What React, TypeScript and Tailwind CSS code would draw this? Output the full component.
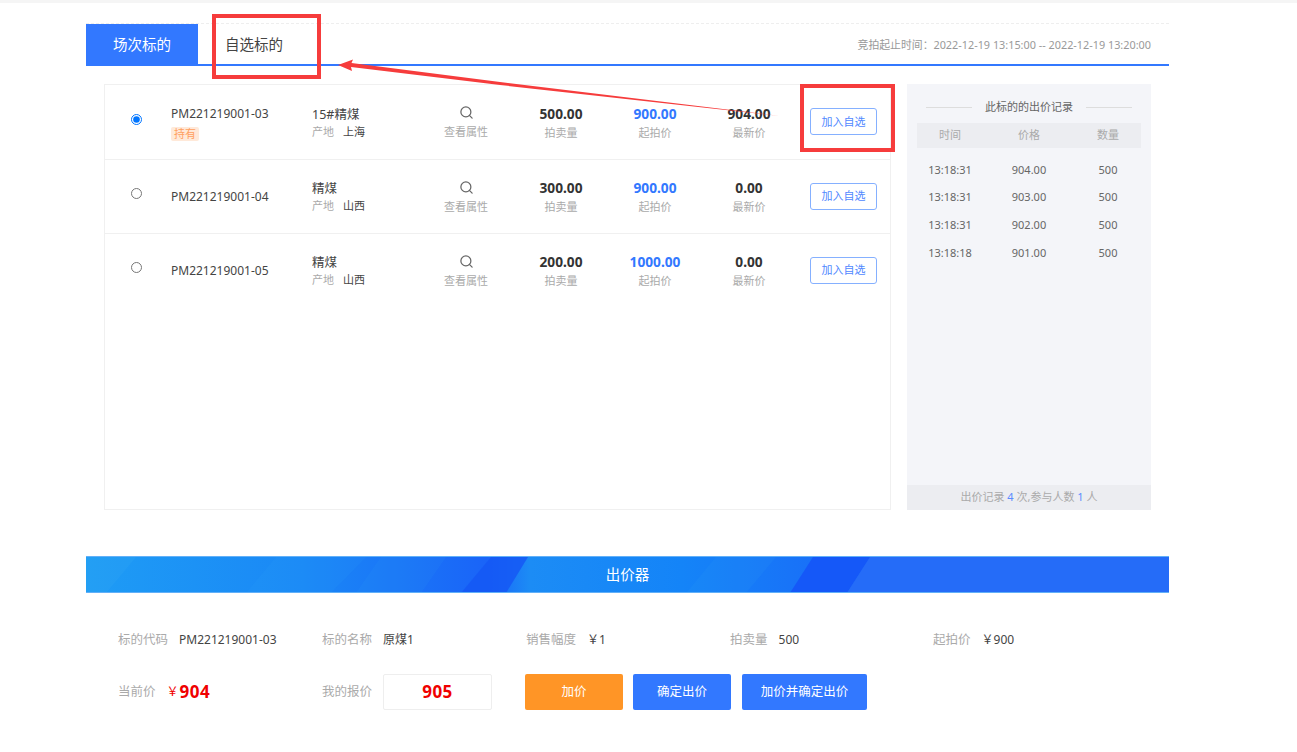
import React from "react";
import { Search } from "lucide-react";

const rows = [
  { code: "PM221219001-03", name: "15#精煤", place: "上海", qty: "500.00", start: "900.00", last: "904.00", held: true },
  { code: "PM221219001-04", name: "精煤", place: "山西", qty: "300.00", start: "900.00", last: "0.00", held: false },
  { code: "PM221219001-05", name: "精煤", place: "山西", qty: "200.00", start: "1000.00", last: "0.00", held: false },
];
const records = [
  ["13:18:31", "904.00", "500"],
  ["13:18:31", "903.00", "500"],
  ["13:18:31", "902.00", "500"],
  ["13:18:18", "901.00", "500"],
];
const info = [
  ["标的代码", "PM221219001-03"],
  ["标的名称", "原煤1"],
  ["销售幅度", "￥1"],
  ["拍卖量", "500"],
  ["起拍价", "￥900"],
];

function Stat({ value, label, blue }: { value: string; label: string; blue?: boolean }) {
  return (
    <div className="w-[94px] pt-[2px] flex flex-col items-center">
      <div className={`text-[13.7px] leading-[18px] font-bold ${blue ? "text-[#3278ff]" : "text-[#333333]"}`}>{value}</div>
      <div className="mt-[2px] text-[11px] leading-[16px] text-[#aaaaaa]">{label}</div>
    </div>
  );
}

export default function App() {
  return (
    <div
      className="relative w-[1297px] h-[752px] overflow-hidden bg-white"
      style={{ fontFamily: '"Noto Sans", "Noto Sans CJK SC", sans-serif' }}
    >
      <div className="h-[3px] bg-[#f5f5f5]" />
      <div className="ml-[86px] w-[1083px] mt-[20px]">
        <div className="border-t border-dashed border-[#eeeeee]" />
        <div className="flex items-center h-[42px] border-b-2 border-[#3278ff]">
          <div className="w-[112px] h-[40px] pt-[2px] bg-[#3278ff] text-white text-[14.5px] flex items-center justify-center">场次标的</div>
          <div className="ml-[27px] pt-[2px] text-[14.5px] text-[#444444]">自选标的</div>
          <div className="ml-auto mr-[18px] pt-[2px] text-[10.85px] text-[#999999]">竞拍起止时间：2022-12-19 13:15:00 -- 2022-12-19 13:20:00</div>
        </div>

        <div className="flex mt-[18px] ml-[18px] h-[426px]">
          <div className="w-[787px] border border-[#f0f0f0]">
            {rows.map((r, i) => (
              <div
                key={r.code}
                className={`flex items-center w-[785px] ${i === 0 ? "h-[74.5px] border-b border-[#f0f0f0]" : i === 1 ? "h-[74.5px] border-b border-[#f0f0f0]" : "h-[72.5px]"}`}
              >
                <div className={`w-[62px] flex justify-center ${i === 1 ? "mb-[5px]" : i === 0 ? "mb-[4px]" : "mb-[6px]"}`}>
                  <input type="radio" readOnly checked={r.held} className="w-[11px] h-[11px] m-0" />
                </div>
                <div className="w-[4px]" />
                <div className="w-[141px] pt-[2px]">
                  <div className="text-[12px] leading-[18px] text-[#444444]">{r.code}</div>
                  {r.held && (
                    <div className="mt-[4px] w-[28px] text-center rounded-[2px] bg-[#ffe9d9] text-[11px] leading-[14px] text-[#ffa060]">持有</div>
                  )}
                </div>
                <div className="w-[118px] pt-[2px]">
                  <div className="text-[12.5px] leading-[18px] text-[#444444]">{r.name}</div>
                  <div className="text-[11px] leading-[16px] flex">
                    <span className="text-[#aaaaaa] mr-[9px]">产地</span>
                    <span className="text-[#444444]">{r.place}</span>
                  </div>
                </div>
                <div className="w-[72px] mr-[12px] pt-[2px] flex flex-col items-center">
                  <Search size={15} strokeWidth={2} className="text-[#666666] mb-[4px]" />
                  <div className="text-[11px] leading-[16px] text-[#aaaaaa]">查看属性</div>
                </div>
                <Stat value={r.qty} label="拍卖量" />
                <Stat value={r.start} label="起拍价" blue />
                <Stat value={r.last} label="最新价" />
                <button className="ml-[14px] w-[67px] h-[27px] border border-[#85b0ff] rounded-[3px] text-[11px] text-[#4f88ff] bg-white">加入自选</button>
              </div>
            ))}
          </div>

          <div className="ml-[16px] w-[244px] bg-[#f4f5f9] flex flex-col">
            <div className="flex items-center justify-between px-[19px] pt-[7px] h-[39px]">
              <div className="w-[46px] h-px bg-[#dddddd]" />
              <div className="text-[11px] text-[#666666]">此标的的出价记录</div>
              <div className="w-[46px] h-px bg-[#dddddd]" />
            </div>
            <div className="mx-[10px] grid grid-cols-[66px_92px_66px] h-[25px] items-center bg-[#ecedf1] text-[11px] text-[#aaaaaa] text-center">
              <div>时间</div>
              <div>价格</div>
              <div>数量</div>
            </div>
            <div className="mx-[10px] mt-[8px] flex-1">
              {records.map((rec, i) => (
                <div key={i} className="grid grid-cols-[66px_92px_66px] h-[27.7px] items-center text-[11px] text-[#666666] text-center">
                  {rec.map((c, j) => <div key={j}>{c}</div>)}
                </div>
              ))}
            </div>
            <div className="h-[25px] bg-[#ecedf1] flex items-center justify-center text-[11px] text-[#aaaaaa]">
              出价记录&nbsp;<span className="text-[#5b8cff]">4</span>&nbsp;次,参与人数&nbsp;<span className="text-[#5b8cff]">1</span>&nbsp;人
            </div>
          </div>
        </div>

        <div className="relative mt-[46px] h-[37px] overflow-hidden bg-[linear-gradient(90deg,#1e9cf5_0%,#1a88f6_20%,#1a64f8_37%,#1c8cf5_41%,#1484f8_55%,#1a6cf8_70%,#1860f8_73%)] border-y border-[#62b0f8] flex items-center justify-center text-white text-[14.5px]">
          <svg className="absolute inset-0" width="1083" height="36" viewBox="0 0 1083 36" aria-hidden="true">
            <polygon points="0,36 0,0 50,0 20,36" fill="#34a8f5" fillOpacity="0.25" />
            <polygon points="160,36 190,0 280,0 245,36" fill="#34a8f5" fillOpacity="0.12" />
            <polygon points="270,36 295,0 360,0 335,36" fill="#34a8f5" fillOpacity="0.1" />
            <polygon points="375,36 405,0 442,0 420,36" fill="#1558f5" fillOpacity="0.85" />
            <polygon points="600,36 630,0 690,0 660,36" fill="#34a8f5" fillOpacity="0.12" />
            <polygon points="704,36 727,0 784,0 761,36" fill="#1558f8" />
            <polygon points="761,36 784,0 1083,0 1083,36" fill="#256cf8" />
          </svg>
          <span className="relative">出价器</span>
        </div>

        <div className="ml-[32px] mt-[37px] grid grid-cols-[204px_204px_204px_203px_204px] items-center h-[20px] text-[12.5px]">
          {info.map(([k, v]) => (
            <div key={k} className="flex items-center">
              <span className="text-[#aaaaaa] mr-[11px]">{k}</span>
              <span className="text-[#444444] text-[12px]">{v}</span>
            </div>
          ))}
        </div>

        <div className="ml-[32px] mt-[24px] flex items-center h-[36px] text-[12.5px]">
          <div className="w-[204px] flex items-center">
            <span className="text-[#aaaaaa] mr-[11px]">当前价</span>
            <span className="text-[#f00000] text-[12px] mr-[1px]">￥</span>
            <span className="text-[#f00000] text-[17px] tracking-[0.5px] font-bold">904</span>
          </div>
          <div className="w-[203px] flex items-center">
            <span className="text-[#aaaaaa] mr-[11px]">我的报价</span>
            <div className="w-[109px] h-[36px] border border-[#eeeeee] rounded-[2px] flex items-center justify-center text-[#f00000] text-[17px] tracking-[0.5px] font-bold">905</div>
          </div>
          <button className="w-[98px] h-[36px] rounded-[2px] bg-[#ff9526] text-white">加价</button>
          <button className="ml-[10px] w-[98px] h-[36px] rounded-[2px] bg-[#3278ff] text-white">确定出价</button>
          <button className="ml-[11px] w-[125px] h-[36px] rounded-[2px] bg-[#3278ff] text-white">加价并确定出价</button>
        </div>
      </div>

      {/* annotations drawn over the screenshot */}
      <div className="absolute left-[212px] top-[14px] w-[109px] h-[65px] border-[4px] border-[#f63c3c]" />
      <div className="absolute left-[800px] top-[84px] w-[95px] h-[68px] border-[4px] border-[#f63c3c]" />
      <svg className="absolute left-0 top-0 pointer-events-none" width="1297" height="752" aria-hidden="true">
        <polygon points="338,65 353,59.5 351.5,63 500,82 780,116 500,85 351,67 352,71" fill="#f63c3c" />
      </svg>
    </div>
  );
}
